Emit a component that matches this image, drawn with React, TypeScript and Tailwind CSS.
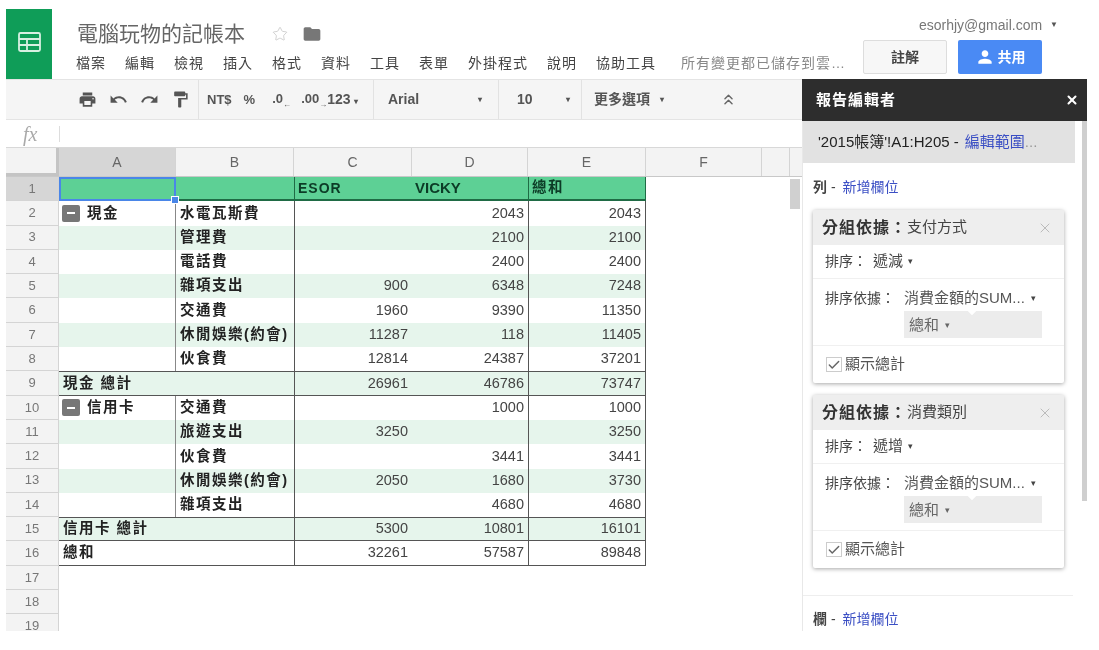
import { MdPrint, MdUndo, MdRedo, MdFormatPaint, MdFolder, MdPerson } from 'react-icons/md'
import { Star, ChevronsUp, Check, X } from 'lucide-react'

const font = { fontFamily: '"Liberation Sans", "Noto Sans CJK TC", sans-serif' }

const menus = ['檔案', '編輯', '檢視', '插入', '格式', '資料', '工具', '表單', '外掛程式', '說明', '協助工具']
const columns = [
  { label: 'A', width: 'w-[117px]', active: true },
  { label: 'B', width: 'w-[118px]' },
  { label: 'C', width: 'w-[118px]' },
  { label: 'D', width: 'w-[116px]' },
  { label: 'E', width: 'w-[118px]' },
  { label: 'F', width: 'w-[116px]' },
  { label: '', width: 'w-[28px]' },
]

type Row = { a?: string; b?: string; c?: string; d?: string; e?: string; minus?: boolean; total?: boolean; band?: boolean }

const rows: Row[] = [
  { a: '現金', minus: true, b: '水電瓦斯費', d: '2043', e: '2043' },
  { b: '管理費', d: '2100', e: '2100', band: true },
  { b: '電話費', d: '2400', e: '2400' },
  { b: '雜項支出', c: '900', d: '6348', e: '7248', band: true },
  { b: '交通費', c: '1960', d: '9390', e: '11350' },
  { b: '休閒娛樂(約會)', c: '11287', d: '118', e: '11405', band: true },
  { b: '伙食費', c: '12814', d: '24387', e: '37201' },
  { a: '現金 總計', c: '26961', d: '46786', e: '73747', total: true, band: true },
  { a: '信用卡', minus: true, b: '交通費', d: '1000', e: '1000' },
  { b: '旅遊支出', c: '3250', e: '3250', band: true },
  { b: '伙食費', d: '3441', e: '3441' },
  { b: '休閒娛樂(約會)', c: '2050', d: '1680', e: '3730', band: true },
  { b: '雜項支出', d: '4680', e: '4680' },
  { a: '信用卡 總計', c: '5300', d: '10801', e: '16101', total: true, band: true },
  { a: '總和', c: '32261', d: '57587', e: '89848', total: true },
]

function RowNumber({ n, active }: { n: number; active?: boolean }) {
  return (
    <div className={`flex h-full w-[53px] shrink-0 items-center justify-center border-r border-b border-[#d4d4d4] text-[13px] text-[#777] ${active ? 'bg-[#d6d6d6]' : 'bg-[#f3f3f3]'}`}>
      {n}
    </div>
  )
}

function SheetRow({ n, row }: { n: number; row: Row }) {
  const bg = row.band ? 'bg-[#e6f5ec]' : 'bg-white'
  const num = 'flex items-center justify-end pr-[4px] text-[14.5px] text-[#444]'
  const label = 'text-[14.5px] tracking-[1.5px] font-bold text-[#222] whitespace-nowrap'
  const lines = row.total ? `border-b border-[#555] ${row.a === '總和' ? '' : 'border-t'}` : ''
  return (
    <div className="flex h-[24.3px]">
      <RowNumber n={n} />
      <div className={`flex w-[587px] ${lines}`}>
        {row.total ? (
          <div className={`flex w-[235px] items-center pl-[4px] ${bg} ${label}`}>{row.a}</div>
        ) : (
          <>
            <div className={`flex w-[117px] items-center gap-[7px] pl-[3px] border-r border-[#888] ${bg} ${label}`}>
              {row.minus && (
                <span className="flex h-[17px] w-[18px] items-center justify-center rounded-[2px] bg-[#777]">
                  <span className="h-[2px] w-[8px] bg-white" />
                </span>
              )}
              {row.a}
            </div>
            <div className={`flex w-[118px] items-center pl-[4px] ${bg} ${label}`}>{row.b}</div>
          </>
        )}
        <div className={`w-[118px] border-l border-[#555] ${bg} ${num}`}>{row.c}</div>
        <div className={`w-[116px] ${bg} ${num}`}>{row.d}</div>
        <div className={`w-[118px] border-x border-[#555] ${bg} ${num}`}>{row.e}</div>
      </div>
    </div>
  )
}

function GroupCard({ field, order }: { field: string; order: string }) {
  return (
    <div className="w-[251px] rounded-[2px] bg-white shadow-[0_1px_4px_rgba(0,0,0,0.35)]">
      <div className="flex h-[35px] items-center justify-between bg-[#eeeeee] pr-[11px] pl-[9px]">
        <span className="flex items-center whitespace-nowrap">
          <span className="text-[16px] font-bold tracking-[1px] text-[#333]">分組依據：</span>
          <span className="text-[15px] text-[#444]">{field}</span>
        </span>
        <X size={16} strokeWidth={1.5} className="text-[#bbb]" />
      </div>
      <div className="flex h-[34px] items-center border-b border-[#f0f0f0] pl-[12px] text-[14px] text-[#444]">
        <span>排序：</span>
        <span className="ml-[6px] text-[15px]">{order}</span>
        <span className="ml-[5px] text-[9px]">▾</span>
      </div>
      <div className="flex h-[67px] flex-col border-b border-[#f0f0f0] pt-[10px] pl-[12px] text-[14px] leading-[18px] text-[#444]">
        <div className="flex items-center whitespace-nowrap">
          <span>排序依據：</span>
          <span className="ml-[9px] text-[15px] text-[#555]">消費金額的SUM...</span>
          <span className="ml-[6px] text-[9px]">▾</span>
        </div>
        <div className="relative mt-[4px] ml-[79px] flex h-[27px] w-[138px] items-center bg-[#ececec] pl-[5px] text-[15px] text-[#666]">
          <span className="absolute -top-[3px] left-[65px] h-[6px] w-[6px] rotate-45 bg-white" />
          總和 <span className="ml-[6px] text-[9px]">▾</span>
        </div>
      </div>
      <div className="flex h-[37px] items-center gap-[3px] pl-[13px] text-[15px] text-[#555]">
        <span className="flex h-[15px] w-[16px] items-center justify-center border border-[#ccc] bg-white">
          <Check size={16} strokeWidth={2.5} className="text-[#666]" />
        </span>
        顯示總計
      </div>
    </div>
  )
}

export default function App() {
  return (
    <div className="h-[650px] w-[1099px] overflow-hidden bg-white pt-[9px] pl-[6px] blur-[0.5px]" style={font}>
      <div className="flex h-[622px] w-[1081px] flex-col overflow-hidden">
        {/* top bar */}
        <div className="flex h-[70px] shrink-0">
          <div className="flex h-[70px] w-[46px] shrink-0 items-center justify-center bg-[#0f9d58] pb-[4px]">
            <svg width="25" height="22" viewBox="0 0 25 22" fill="none" stroke="#d8f0e2" strokeWidth="1.8">
              <rect x="2" y="2" width="21" height="18" rx="1.5" />
              <path d="M2 8h21M2 14h21M10 8v12" />
            </svg>
          </div>
          <div className="ml-[25px] flex flex-col pt-[13px]">
            <div className="flex items-center">
              <span className="text-[21px] leading-[24px] whitespace-nowrap text-[#666]">電腦玩物的記帳本</span>
              <Star size={16} strokeWidth={1} className="ml-[27px] text-[#bbb]" />
              <MdFolder size={20} className="ml-[14px] text-[#777]" />
            </div>
            <div className="mt-[8px] -ml-px flex text-[14px] leading-[18px] tracking-[1px] text-[#444]">
              {menus.map(m => (
                <span key={m} className="mr-[19px] whitespace-nowrap">{m}</span>
              ))}
              <span className="ml-[6px] whitespace-nowrap text-[#888]">所有變更都已儲存到雲…</span>
            </div>
          </div>
          <div className="ml-auto flex flex-col items-end pt-[8px] pr-[45px]">
            <div className="-mr-[16px] flex items-center gap-[8px] text-[14px] leading-[16px] text-[#777]">
              esorhjy@gmail.com <span className="text-[8px] text-[#555]">▼</span>
            </div>
            <div className="mt-[7px] flex gap-[11px]">
              <div className="flex h-[34px] w-[84px] items-center justify-center rounded-[2px] border border-[#ddd] bg-[#f7f7f7] text-[14px] font-bold text-[#444]">註解</div>
              <div className="flex h-[34px] w-[84px] items-center justify-center gap-[3px] rounded-[2px] bg-[#4a8af4] text-[14px] font-bold text-white">
                <MdPerson size={20} /> 共用
              </div>
            </div>
          </div>
        </div>

        <div className="flex min-h-0 flex-1">
          {/* sheet side */}
          <div className="flex w-[796px] shrink-0 flex-col">
            <div className="flex h-[41px] shrink-0 items-center border-y border-[#e4e4e4] bg-[#f5f5f5] pl-[72px] text-[13px] font-bold text-[#555]">
              <div className="flex h-full w-[121px] items-center gap-[12px] border-r border-[#e2e2e2] text-[#555]">
                <MdPrint size={19} />
                <MdUndo size={19} />
                <MdRedo size={19} />
                <MdFormatPaint size={19} />
              </div>
              <div className="flex h-full w-[175px] items-center border-r border-[#e2e2e2] pl-[8px] whitespace-nowrap">
                <span>NT$</span>
                <span className="ml-[12px]">%</span>
                <span className="ml-[17px] w-[18px]">.0<span className="align-sub text-[8px]">←</span></span>
                <span className="ml-[11px] w-[26px]">.00<span className="align-sub text-[8px]">→</span></span>
                <span className="text-[14px]">123 <span className="text-[8px]">▾</span></span>
              </div>
              <div className="flex h-full w-[125px] items-center justify-between border-r border-[#e2e2e2] pr-[16px] pl-[14px] text-[14px]">
                <span>Arial</span><span className="text-[8px]">▾</span>
              </div>
              <div className="flex h-full w-[83px] items-center justify-between border-r border-[#e2e2e2] pr-[11px] pl-[18px] text-[14px]">
                <span>10</span><span className="text-[8px]">▾</span>
              </div>
              <div className="flex h-full items-center pl-[12px] text-[14px] whitespace-nowrap">
                更多選項 <span className="ml-[10px] text-[8px]">▾</span>
                <ChevronsUp size={17} className="ml-[56px] text-[#666]" />
              </div>
            </div>

            <div className="flex h-[28px] shrink-0 items-center border-b border-[#d8d8d8]">
              <span className="w-[53px] pl-[17px] font-['Liberation_Serif'] text-[20px] text-[#aaa] italic">fx</span>
              <span className="h-[16px] w-px bg-[#ddd]" />
            </div>

            <div className="flex h-[29px] shrink-0 border-b border-[#c8c8c8] bg-[#f3f3f3]">
              <div className="w-[53px] border-r-[3px] border-b-[3px] border-[#c4c4c4]" />
              {columns.map(c => (
                <div key={c.label} className={`flex items-center justify-center border-r border-[#d4d4d4] text-[14px] text-[#666] ${c.width} ${c.active ? 'bg-[#d6d6d6]' : ''}`}>
                  {c.label}
                </div>
              ))}
            </div>

            <div className="flex min-h-0 flex-1">
              <div className="min-w-0 flex-1 overflow-hidden">
                {/* header row of the pivot table */}
                <div className="flex h-[24.3px]">
                  <RowNumber n={1} active />
                  <div className="relative w-[117px] border-2 border-[#4a86e8] bg-[#5dd095]">
                    <span className="absolute -right-[4px] -bottom-[4px] h-[6px] w-[6px] bg-[#4a86e8] outline outline-white" />
                  </div>
                  <div className="w-[118px] border-b-2 border-[#1f6b45] bg-[#5dd095]" />
                  <div className="flex w-[118px] items-center border-b-2 border-l border-[#1f6b45] bg-[#5dd095] pl-[3px] text-[14px] font-bold tracking-[1px] text-[#0c3b26]">ESOR</div>
                  <div className="flex w-[116px] items-center border-b-2 border-[#1f6b45] bg-[#5dd095] pl-[3px] text-[15px] font-bold text-[#0c3b26]">VICKY</div>
                  <div className="flex w-[118px] items-center border-x border-b-2 border-[#1f6b45] bg-[#5dd095] pl-[3px] text-[14.5px] font-bold tracking-[1.5px] text-[#0c3b26]">總和</div>
                </div>
                {rows.map((r, i) => (
                  <SheetRow key={i} n={i + 2} row={r} />
                ))}
                {[17, 18, 19].map(n => (
                  <div key={n} className="flex h-[24.3px]">
                    <RowNumber n={n} />
                  </div>
                ))}
              </div>
              <div className="w-[12px] shrink-0 pt-[2px]">
                <div className="h-[30px] w-[10px] bg-[#d0d0d0]" />
              </div>
            </div>
          </div>

          {/* report editor */}
          <div className="flex w-[285px] shrink-0 flex-col">
            <div className="flex h-[42px] shrink-0 items-center justify-between bg-[#2d2d2d] pr-[8px] pl-[14px] text-[15px] font-bold tracking-[1px] text-white">
              報告編輯者
              <X size={14} strokeWidth={3.5} />
            </div>
            <div className="flex min-h-0 flex-1">
              <div className="min-w-0 flex-1 border-l border-[#e8e8e8]">
                <div className="flex h-[42px] w-[272px] items-center bg-[#e2e2e2] pl-[15px] text-[15px] whitespace-nowrap text-[#222]">
                  '2015帳簿'!A1:H205 - <span className="ml-[6px] text-[#3b4fc4]">編輯範圍</span><span className="text-[#999]">...</span>
                </div>
                <div className="pt-[15px] pl-[10px]">
                  <div className="text-[14px] leading-[18px] text-[#444]">
                    <span className="font-bold">列</span> - <span className="ml-[3px] text-[#3b4fc4]">新增欄位</span>
                  </div>
                  <div className="mt-[14px] flex flex-col gap-[12px]">
                    <GroupCard field="支付方式" order="遞減" />
                    <GroupCard field="消費類別" order="遞增" />
                  </div>
                </div>
                <div className="mt-[27px] w-[270px] border-t border-[#eee] pt-[14px] pl-[10px] text-[14px] leading-[18px] text-[#444]">
                  <span className="font-bold">欄</span> - <span className="ml-[3px] text-[#3b4fc4]">新增欄位</span>
                </div>
              </div>
              <div className="h-[380px] w-[5px] shrink-0 bg-[#cfcfcf]" />
            </div>
          </div>
        </div>
      </div>
    </div>
  )
}
